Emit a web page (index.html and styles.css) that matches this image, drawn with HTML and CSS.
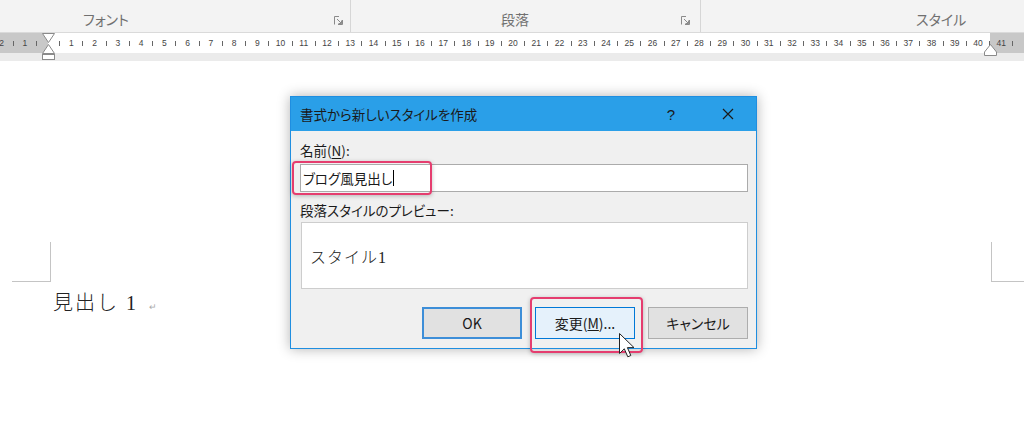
FILE: index.html
```html
<!DOCTYPE html>
<html lang="ja">
<head>
    <meta charset="UTF-8">
    <meta name="viewport" content="width=device-width, initial-scale=1.0">
    <title>書式から新しいスタイルを作成</title>
    <link rel="stylesheet" href="styles.css">
</head>
<body>
    <div class="screen">
        <div class="ribbon">
            <div class="group group-font">
                <span class="group-label">フォント</span>
                <span class="launcher"><svg width="9" height="9" viewBox="0 0 9 9"><path d="M0.5 8.5V0.5H5M8.5 4V8.5H4M3 3L7.5 7.5M7.5 4.5V7.5H4.5" fill="none" stroke="#8a8a8a" stroke-width="1"/></svg></span>
            </div>
            <div class="group group-para">
                <span class="group-label">段落</span>
                <span class="launcher"><svg width="9" height="9" viewBox="0 0 9 9"><path d="M0.5 8.5V0.5H5M8.5 4V8.5H4M3 3L7.5 7.5M7.5 4.5V7.5H4.5" fill="none" stroke="#8a8a8a" stroke-width="1"/></svg></span>
            </div>
            <div class="group group-style">
                <span class="group-label">スタイル</span>
            </div>
        </div>

        <div class="ruler">
            <div class="ruler-scale" id="ruler-scale"></div>
            <svg class="indent-left" width="13" height="27" viewBox="0 0 13 27">
                <polygon points="0.5,0.5 12.5,0.5 6.5,9.5" fill="#fff" stroke="#8a8a8a"/>
                <polygon points="6.5,11.5 12.5,20.5 0.5,20.5" fill="#fff" stroke="#8a8a8a"/>
                <rect x="0.5" y="21.5" width="12" height="5" fill="#fff" stroke="#8a8a8a"/>
            </svg>
            <svg class="indent-right" width="13" height="12" viewBox="0 0 13 12">
                <polygon points="6.5,0.5 12.5,8 12.5,11.5 0.5,11.5 0.5,8" fill="#fff" stroke="#8a8a8a"/>
            </svg>
        </div>
        <div class="ruler-shadow"></div>

        <div class="page">
            <div class="corners">
                <span class="corner corner-left"></span>
                <span class="corner corner-right"></span>
            </div>
            <p class="heading">見出し 1<span class="para-mark">↵</span></p>
        </div>

        <div class="dialog">
            <div class="dialog-title">
                <span class="title-text">書式から新しいスタイルを作成</span>
                <span class="title-help">?</span>
                <span class="title-close"><svg width="12" height="12" viewBox="0 0 12 12"><path d="M1 1L11 11M11 1L1 11" stroke="#1a1a1a" stroke-width="1.2"/></svg></span>
            </div>
            <div class="dialog-body">
                <div class="field-label">名前(<u>N</u>):</div>
                <div class="name-field">
                    <div class="text-input">ブログ風見出し<span class="caret"></span></div>
                    <span class="highlight highlight-name"></span>
                </div>
                <div class="field-label label-preview">段落スタイルのプレビュー:</div>
                <div class="preview"><span class="preview-text">スタイル1</span></div>
                <div class="buttons">
                    <button class="btn btn-default">OK</button>
                    <span class="btn-wrap">
                        <button class="btn btn-hover">変更(<u>M</u>)...</button>
                        <span class="highlight highlight-modify"></span>
                        <svg class="cursor" width="16" height="25" viewBox="0 0 16 25">
                            <path d="M0.5 0.5V20.5L5.3 15.8L8.8 23.8L11.8 22.5L8.4 14.6H15Z" fill="#fff" stroke="#222" stroke-width="1" stroke-linejoin="round"/>
                        </svg>
                    </span>
                    <button class="btn">キャンセル</button>
                </div>
            </div>
        </div>
    </div>

    <script>
        // Règle : un chiffre par cran, un trait entre deux chiffres
        const scale = document.getElementById('ruler-scale');
        for (let n = -2; n <= 41; n++) {
            const num = document.createElement('span');
            num.className = 'ruler-num';
            num.textContent = n === 0 ? '' : Math.abs(n);
            scale.appendChild(num);

            const tick = document.createElement('span');
            tick.className = 'ruler-tick';
            scale.appendChild(tick);
        }
    </script>
</body>
</html>
```

FILE: styles.css
```css
* {
    box-sizing: border-box;
}
body {
    margin: 0;
    width: 1024px;
    height: 441px;
    overflow: hidden;
    background-color: #fff;
    font-family: "Noto Sans CJK JP", sans-serif;
    font-feature-settings: "palt";
    color: #1a1a1a;
}
.screen {
    position: relative;
    height: 441px;
    overflow: hidden;
}

/* ruban */
.ribbon {
    display: flex;
    height: 33px;
    background-color: #f3f3f3;
    border-bottom: 1px solid #dadada;
}
.group {
    flex: none;
    display: flex;
    align-items: center;
    padding-top: 6px;
    border-right: 1px solid #d6d6d6;
}
.group-font {
    width: 351px;
}
.group-para {
    width: 350px;
}
.group-style {
    flex: 1;
    border-right: none;
}
.group-label {
    font-size: 14px;
    line-height: 18px;
    color: #707070;
}
.group-font .group-label {
    margin-left: 83px;
}
.group-para .group-label {
    margin-left: 150px;
}
.group-style .group-label {
    margin-left: 215px;
}
.launcher {
    display: flex;
    margin-left: auto;
    margin-right: 7px;
    margin-top: 2px;
}
.group-para .launcher {
    margin-right: 10px;
}

/* règle */
.ruler {
    position: relative;
    z-index: 1;
    height: 20px;
    background: linear-gradient(to right, #c8c8c8 48px, #fff 48px, #fff 990px, #c8c8c8 990px);
}
.ruler-scale {
    display: flex;
    align-items: center;
    height: 100%;
    margin-left: -4.3px;
}
.ruler-num {
    flex: none;
    display: flex;
    justify-content: center;
    width: 11.625px;
    font: 8.5px "Liberation Sans", sans-serif;
    color: #444;
    white-space: nowrap;
}
.ruler-tick {
    flex: none;
    display: flex;
    justify-content: center;
    width: 11.625px;
}
.ruler-tick::before {
    content: "";
    width: 1px;
    height: 5px;
    background-color: #666;
}
.indent-left {
    position: absolute;
    left: 42px;
    top: 0;
}
.indent-right {
    position: absolute;
    left: 984px;
    top: 11px;
}
.ruler-shadow {
    height: 8px;
    background-color: #ebebeb;
}

/* page */
.page {
    height: 380px;
    padding-top: 181px;
    background-color: #fff;
}
.corners {
    display: flex;
    justify-content: space-between;
    padding-left: 12px;
}
.corner {
    height: 40px;
    border-bottom: 1px solid #c4c4c4;
}
.corner-left {
    width: 39px;
    border-right: 1px solid #c4c4c4;
}
.corner-right {
    width: 33px;
    border-left: 1px solid #c4c4c4;
}
.heading {
    margin: 7px 0 0 53px;
    font-family: "Liberation Serif", "Noto Sans CJK JP", serif;
    font-feature-settings: normal;
    font-size: 20px;
    font-weight: 300;
    line-height: 28px;
    letter-spacing: 2px;
    color: #222;
}
.para-mark {
    margin-left: 11px;
    font-size: 9px;
    color: #aaa;
}

/* boîte de dialogue */
.dialog {
    position: absolute;
    left: 290px;
    top: 96px;
    width: 467px;
    height: 253px;
    display: flex;
    flex-direction: column;
    background-color: #f0f0f0;
    border: 1px solid #1f8ee0;
    box-shadow: 0 0 12px rgba(0, 0, 0, 0.3);
}
.dialog-title {
    display: flex;
    align-items: center;
    height: 34px;
    padding: 0 22px 0 9px;
    background-color: #2a9fe8;
}
.title-text {
    flex: 1;
    font-size: 13.5px;
    color: #1a1a1a;
}
.title-help {
    margin-right: 47px;
    font: 15px "Liberation Sans", sans-serif;
    color: #1a1a1a;
}
.title-close {
    display: flex;
}
.dialog-body {
    padding: 10px 8px 0 9px;
}
.field-label {
    font-size: 13.5px;
    line-height: 18px;
}
.field-label u {
    text-underline-offset: 2px;
}
.name-field {
    position: relative;
    margin-top: 5px;
}
.text-input {
    display: flex;
    align-items: center;
    height: 28px;
    padding-left: 2px;
    background-color: #fff;
    border: 1px solid #ababab;
    font-size: 13.5px;
}
.caret {
    display: inline-block;
    width: 1px;
    height: 16px;
    margin-left: 1px;
    background-color: #000;
}
.highlight {
    position: absolute;
    border: 2px solid #e53d6f;
    border-radius: 4px;
    box-shadow: 0 1px 4px rgba(0, 0, 0, 0.25);
}
.highlight-name {
    left: -8px;
    top: -3px;
    width: 140px;
    height: 34px;
}
.label-preview {
    margin-top: 9px;
}
.preview {
    display: flex;
    align-items: center;
    height: 67px;
    margin: 3px 0 0 1px;
    padding-left: 8px;
    background-color: #fff;
    border: 1px solid #cdcdcd;
}
.preview-text {
    font-family: "Liberation Serif", "Noto Sans CJK JP", serif;
    font-feature-settings: normal;
    font-size: 16px;
    font-weight: 300;
    letter-spacing: 1px;
    color: #222;
}
.buttons {
    display: flex;
    justify-content: flex-end;
    gap: 13px;
    margin-top: 18px;
}
.btn-wrap {
    position: relative;
    display: flex;
}
.btn {
    width: 100px;
    height: 32px;
    padding: 0;
    background-color: #e1e1e1;
    border: 1px solid #adadad;
    font-family: "Noto Sans CJK JP", sans-serif;
    font-feature-settings: "palt";
    font-size: 14px;
    color: #1a1a1a;
}
.btn-default {
    border: 2px solid #3d8ed8;
}
.btn-hover {
    background-color: #e5f1fb;
    border-color: #0078d7;
}
.highlight-modify {
    left: -5px;
    top: -10px;
    width: 113px;
    height: 56px;
}
.cursor {
    position: absolute;
    left: 84px;
    top: 26px;
}
```
